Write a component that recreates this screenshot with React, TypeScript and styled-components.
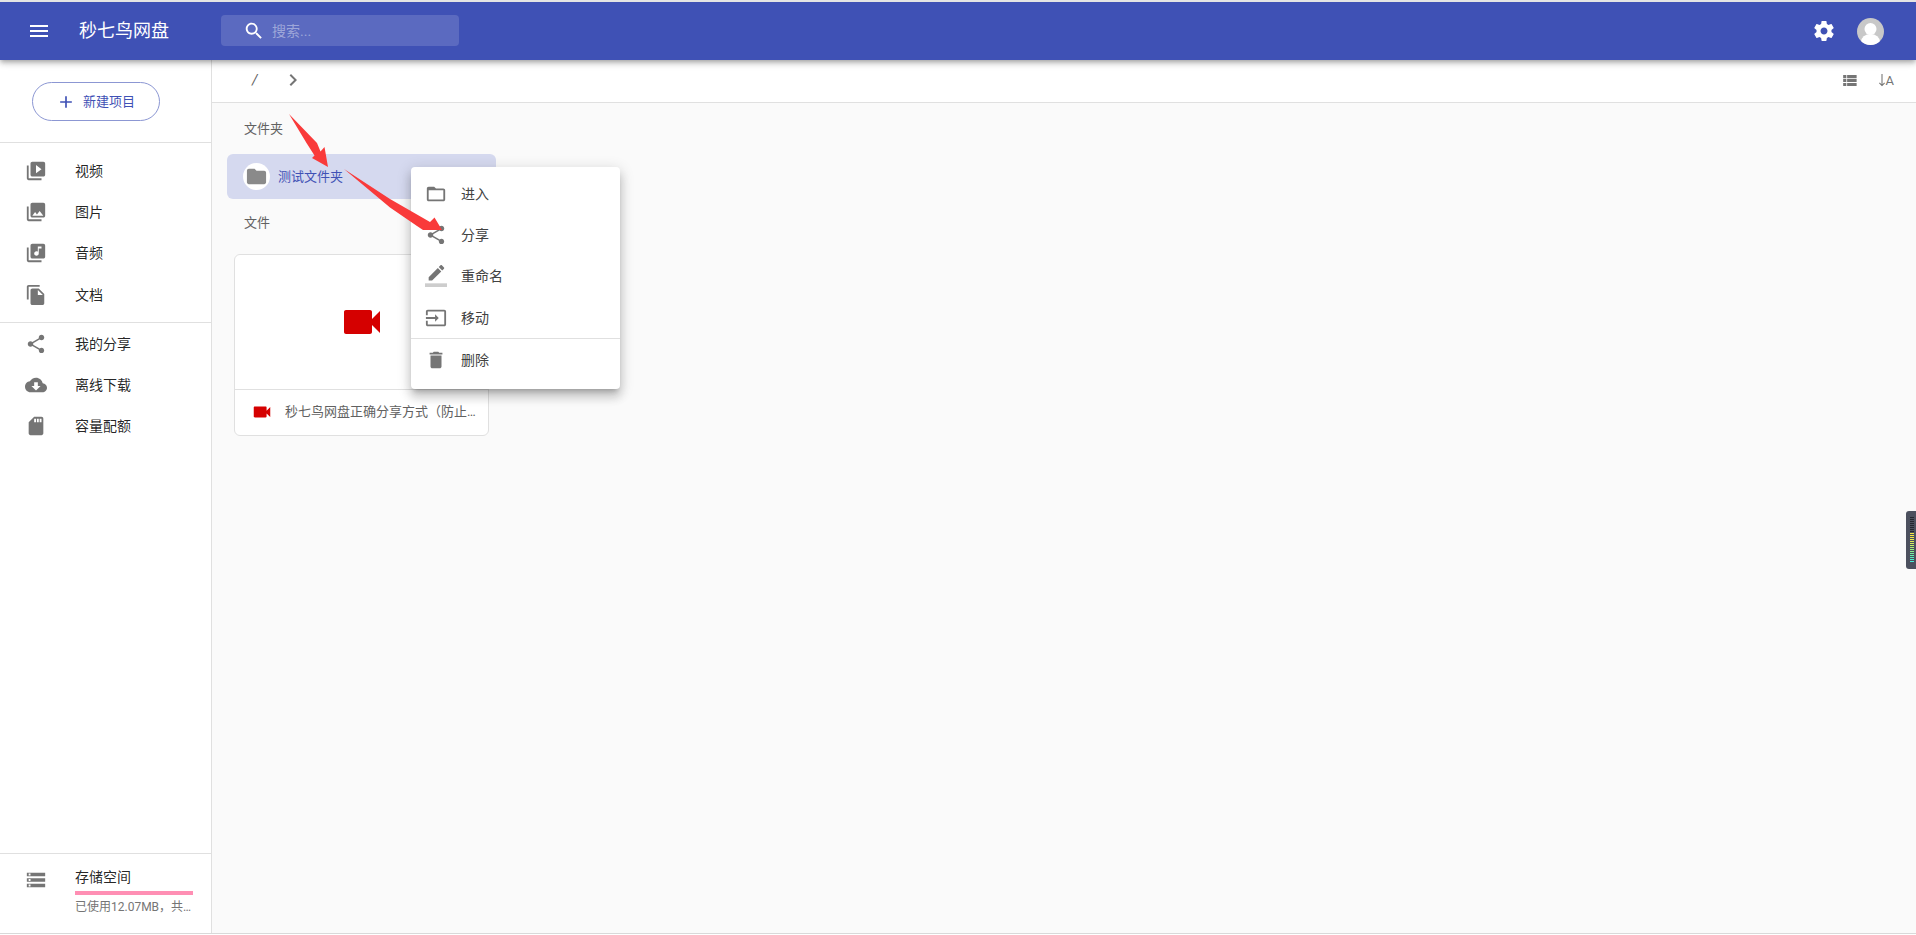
import React from 'react'
import styled, { createGlobalStyle } from 'styled-components'

const FONT = `Roboto, "Noto Sans CJK SC", "Noto Sans", sans-serif`

const GlobalStyle = createGlobalStyle`
  html, body {
    margin: 0;
    padding: 0;
    background: #ffffff;
    font-family: ${FONT};
    overflow: hidden;
  }
`

const ICONS: Record<string, React.ReactNode> = {
  menu: <path d="M3 18h18v-2H3v2zm0-5h18v-2H3v2zm0-7v2h18V6H3z" />,
  search: <path d="M15.5 14h-.79l-.28-.27C15.41 12.59 16 11.11 16 9.5 16 5.91 13.09 3 9.5 3S3 5.91 3 9.5 5.91 16 9.5 16c1.61 0 3.09-.59 4.23-1.57l.27.28v.79l5 4.99L20.49 19l-4.99-5zm-6 0C7.01 14 5 11.99 5 9.5S7.01 5 9.5 5 14 7.01 14 9.5 11.99 14 9.5 14z" />,
  settings: <path d="M19.43 12.98c.04-.32.07-.64.07-.98s-.03-.66-.07-.98l2.11-1.65c.19-.15.24-.42.12-.64l-2-3.46c-.12-.22-.39-.3-.61-.22l-2.49 1c-.52-.4-1.08-.73-1.69-.98l-.38-2.65C14.46 2.18 14.25 2 14 2h-4c-.25 0-.46.18-.49.42l-.38 2.65c-.61.25-1.17.59-1.69.98l-2.49-1c-.23-.09-.49 0-.61.22l-2 3.46c-.13.22-.07.49.12.64l2.11 1.65c-.04.32-.07.65-.07.98s.03.66.07.98l-2.11 1.65c-.19.15-.24.42-.12.64l2 3.46c.12.22.39.3.61.22l2.49-1c.52.4 1.08.73 1.69.98l.38 2.65c.03.24.24.42.49.42h4c.25 0 .46-.18.49-.42l.38-2.65c.61-.25 1.17-.59 1.69-.98l2.49 1c.23.09.49 0 .61-.22l2-3.46c.12-.22.07-.49-.12-.64l-2.11-1.65zM12 15.5c-1.93 0-3.5-1.57-3.5-3.5s1.57-3.5 3.5-3.5 3.5 1.57 3.5 3.5-1.57 3.5-3.5 3.5z" />,
  add: <path d="M19 13h-6v6h-2v-6H5v-2h6V5h2v6h6v2z" />,
  video: <path d="M4 6H2v14c0 1.1.9 2 2 2h14v-2H4V6zm16-4H8c-1.1 0-2 .9-2 2v12c0 1.1.9 2 2 2h12c1.1 0 2-.9 2-2V4c0-1.1-.9-2-2-2zm-8 12.5v-9l6 4.5-6 4.5z" />,
  photo: <path d="M22 16V4c0-1.1-.9-2-2-2H8c-1.1 0-2 .9-2 2v12c0 1.1.9 2 2 2h12c1.1 0 2-.9 2-2zm-11-4l2.03 2.71L16 11l4 5H8l3-4zM2 6v14c0 1.1.9 2 2 2h14v-2H4V6H2z" />,
  music: <path d="M20 2H8c-1.1 0-2 .9-2 2v12c0 1.1.9 2 2 2h12c1.1 0 2-.9 2-2V4c0-1.1-.9-2-2-2zm-2 5h-3v5.5c0 1.38-1.12 2.5-2.5 2.5S10 13.88 10 12.5s1.12-2.5 2.5-2.5c.57 0 1.08.19 1.5.51V5h4v2zM4 6H2v14c0 1.1.9 2 2 2h14v-2H4V6z" />,
  doc: <path d="M16 1H4c-1.1 0-2 .9-2 2v14h2V3h12V1zm-1 4l6 6v10c0 1.1-.9 2-2 2H7.99C6.89 23 6 22.1 6 21l.01-14c0-1.1.89-2 1.99-2h7zm-1 7h5.5L14 6.5V12z" />,
  share: <path d="M18 16.08c-.76 0-1.44.3-1.96.77L8.91 12.7c.05-.23.09-.46.09-.7s-.04-.47-.09-.7l7.05-4.11c.54.5 1.25.81 2.04.81 1.66 0 3-1.34 3-3s-1.34-3-3-3-3 1.34-3 3c0 .24.04.47.09.7L8.04 9.81C7.5 9.31 6.79 9 6 9c-1.66 0-3 1.34-3 3s1.34 3 3 3c.79 0 1.5-.31 2.04-.81l7.12 4.16c-.05.21-.08.43-.08.65 0 1.61 1.31 2.92 2.92 2.92 1.61 0 2.92-1.31 2.92-2.92s-1.31-2.92-2.92-2.92z" />,
  cloud: <path d="M19.35 10.04C18.67 6.59 15.64 4 12 4 9.11 4 6.6 5.64 5.35 8.04 2.34 8.36 0 10.91 0 14c0 3.31 2.69 6 6 6h13c2.76 0 5-2.24 5-5 0-2.64-2.05-4.78-4.65-4.96zM17 13l-5 5-5-5h3V9h4v4h3z" />,
  sd: <path d="M18 2h-8L4.02 8 4 20c0 1.1.9 2 2 2h12c1.1 0 2-.9 2-2V4c0-1.1-.9-2-2-2zm-6 6h-2V4h2v4zm3 0h-2V4h2v4zm3 0h-2V4h2v4z" />,
  storage: <path d="M2 20h20v-4H2v4zm2-3h2v2H4v-2zM2 4v4h20V4H2zm4 3H4V5h2v2zm-4 7h20v-4H2v4zm2-3h2v2H4v-2z" />,
  folder: <path d="M10 4H4c-1.1 0-1.99.9-1.99 2L2 18c0 1.1.9 2 2 2h16c1.1 0 2-.9 2-2V8c0-1.1-.9-2-2-2h-8l-2-2z" />,
  folderOpen: <path d="M20 6h-8l-2-2H4c-1.1 0-1.99.9-1.99 2L2 18c0 1.1.9 2 2 2h16c1.1 0 2-.9 2-2V8c0-1.1-.9-2-2-2zm0 12H4V8h16v10z" />,
  rename: (
    <>
      <path d="M17.75 7L14 3.25l-10 10V17h3.75l10-10zm2.96-2.96c.39-.39.39-1.02 0-1.41L18.37.29c-.39-.39-1.02-.39-1.41 0L15 2.25 18.75 6l1.96-1.96z" />
      <path fillOpacity=".36" d="M0 20h24v4H0z" />
    </>
  ),
  move: <path d="M21 3.01H3c-1.1 0-2 .9-2 2V9h2V4.99h18v14.03H3V15H1v4.01c0 1.1.9 1.98 2 1.98h18c1.1 0 2-.88 2-1.98v-14c0-1.1-.9-2-2-2zM11 16l4-4-4-4v3H1v2h10v3z" />,
  trash: <path d="M6 19c0 1.1.9 2 2 2h8c1.1 0 2-.9 2-2V7H6v12zM19 4h-3.5l-1-1h-5l-1 1H5v2h14V4z" />,
  camera: <path d="M17 10.5V7c0-.55-.45-1-1-1H4c-.55 0-1 .45-1 1v10c0 .55.45 1 1 1h12c.55 0 1-.45 1-1v-3.5l4 4v-11l-4 4z" />,
  list: <path d="M4 14h4v-4H4v4zm0 5h4v-4H4v4zM4 9h4V5H4v4zm5 5h12v-4H9v4zm0 5h12v-4H9v4zM9 5v4h12V5H9z" />,
  chevron: <path d="M10 6L8.59 7.41 13.17 12l-4.58 4.59L10 18l6-6z" />,
  arrowDown: <path d="M11.2 3h1.6v15.5l2.6-2.6 1.1 1.1-4.5 4.5-4.5-4.5 1.1-1.1 2.6 2.6z" />,
}

const IconSvg = styled.svg<{ $size?: number; $color?: string }>`
  display: block;
  flex: none;
  width: ${p => p.$size ?? 22}px;
  height: ${p => p.$size ?? 22}px;
  fill: ${p => p.$color ?? '#757575'};
`

const Icon = ({ name, size, color }: { name: string; size?: number; color?: string }) => (
  <IconSvg viewBox="0 0 24 24" $size={size} $color={color}>{ICONS[name]}</IconSvg>
)

const Page = styled.div`
  position: relative;
  width: 1916px;
  height: 935px;
  display: flex;
  flex-direction: column;
  border-top: 2px solid #e4e4e4;
  box-sizing: border-box;
  overflow: hidden;
  line-height: 1;
`

const AppBar = styled.header`
  flex: none;
  height: 58px;
  padding: 0 32px 0 27px;
  display: flex;
  align-items: center;
  background: #3f51b5;
  color: #ffffff;
  position: relative;
  z-index: 2;
  box-shadow: 0 2px 4px -1px rgba(0,0,0,.2), 0 4px 5px 0 rgba(0,0,0,.14), 0 1px 10px 0 rgba(0,0,0,.12);
`

const Brand = styled.div`
  margin-left: 28px;
  width: 90px;
  font-size: 18px;
  font-weight: 400;
  white-space: nowrap;
`

const SearchBox = styled.div`
  margin: 0 0 1px 52px;
  width: 238px;
  height: 31px;
  padding-left: 22px;
  box-sizing: border-box;
  display: flex;
  align-items: center;
  gap: 7px;
  border-radius: 4px;
  background: rgba(255,255,255,.15);
  font-size: 14px;
  color: rgba(255,255,255,.42);
`

const BarActions = styled.div`
  margin-left: auto;
  display: flex;
  align-items: center;
  gap: 21px;
`

const Avatar = styled.svg`
  display: block;
  width: 27px;
  height: 27px;
`

const Body = styled.div`
  flex: 1;
  min-height: 0;
  display: flex;
`

const Sidebar = styled.aside`
  flex: none;
  width: 212px;
  box-sizing: border-box;
  display: flex;
  flex-direction: column;
  border-right: 1px solid #e0e0e0;
  background: #ffffff;
`

const NewBlock = styled.div`
  height: 83px;
  padding: 22px 0 0 32px;
  box-sizing: border-box;
  border-bottom: 1px solid #e0e0e0;
`

const NewButton = styled.div`
  width: 128px;
  height: 39px;
  box-sizing: border-box;
  display: flex;
  align-items: center;
  padding-left: 23px;
  gap: 7px;
  border: 1px solid #8c97d3;
  border-radius: 20px;
  font-size: 13px;
  color: #3f51b5;
`

const NavList = styled.nav<{ $divided?: boolean }>`
  padding: ${p => (p.$divided ? '7px 0 7px' : '0')};
  border-bottom: ${p => (p.$divided ? '1px solid #e0e0e0' : 'none')};
`

const NavRow = styled.div`
  height: 41.3px;
  padding-left: 25px;
  display: flex;
  align-items: center;
  font-size: 14px;
  color: rgba(0,0,0,.87);
`

const NavLabel = styled.span`
  margin-left: 28px;
`

const StoragePanel = styled.div`
  margin-top: auto;
  height: 80px;
  box-sizing: border-box;
  border-top: 1px solid #e0e0e0;
  padding: 15px 0 0 25px;
  display: flex;
`

const StorageInfo = styled.div`
  margin-left: 28px;
  width: 118px;
`

const StorageTitle = styled.div`
  font-size: 14px;
  line-height: 16px;
  color: rgba(0,0,0,.87);
`

const StorageBar = styled.div`
  margin-top: 6px;
  height: 4px;
  background: #ff8fb4;
`

const StorageText = styled.div`
  margin-top: 3px;
  font-size: 12px;
  line-height: 18px;
  color: #757575;
  white-space: nowrap;
  overflow: hidden;
  text-overflow: ellipsis;
`

const Main = styled.main`
  flex: 1;
  min-width: 0;
  background: #fafafa;
`

const PathBar = styled.div`
  height: 43px;
  box-sizing: border-box;
  padding: 0 22px 2px 40px;
  display: flex;
  align-items: center;
  background: #ffffff;
  border-bottom: 1px solid #e0e0e0;
`

const Slash = styled.span`
  width: 29px;
  font-size: 14px;
  font-style: italic;
  color: #616161;
`

const PathTools = styled.div`
  margin-left: auto;
  display: flex;
  align-items: center;
  gap: 15px;
`

const SortGlyph = styled.div`
  display: flex;
  align-items: center;
  font-size: 13px;
  color: #757575;
`

const SortLetter = styled.span`
  margin-left: -4px;
`

const Content = styled.div`
  padding: 0 15px;
`

const SectionLabel = styled.div`
  height: 51px;
  padding-left: 17px;
  display: flex;
  align-items: center;
  font-size: 13px;
  color: #616161;
`

const FolderRow = styled.div`
  width: 269px;
  height: 45px;
  box-sizing: border-box;
  padding-left: 16px;
  display: flex;
  align-items: center;
  border-radius: 6px;
  background: #d5d9ef;
  font-size: 13px;
  color: #3f51b5;
`

const FolderBadge = styled.div`
  width: 27px;
  height: 27px;
  margin-right: 8px;
  display: flex;
  align-items: center;
  justify-content: center;
  border-radius: 50%;
  background: #ffffff;
`

const FileSection = styled(SectionLabel)`
  height: 46px;
`

const FileCard = styled.div`
  margin: 9px 0 0 7px;
  width: 255px;
  height: 182px;
  box-sizing: border-box;
  border: 1px solid #e0e0e0;
  border-radius: 6px;
  background: #ffffff;
  overflow: hidden;
`

const Preview = styled.div`
  height: 134px;
  display: flex;
  align-items: center;
  justify-content: center;
  border-bottom: 1px solid #e0e0e0;
`

const FileTitle = styled.div`
  height: 43px;
  padding: 0 10px 0 16px;
  display: flex;
  align-items: center;
  gap: 12px;
  font-size: 13px;
  color: #616161;
`

const FileName = styled.span`
  line-height: 16px;
  white-space: nowrap;
  overflow: hidden;
  text-overflow: ellipsis;
`

const ContextMenu = styled.div`
  position: absolute;
  left: 411px;
  top: 165px;
  width: 209px;
  height: 222px;
  box-sizing: border-box;
  padding-top: 6px;
  border-radius: 4px;
  background: #ffffff;
  z-index: 3;
  box-shadow: 0 5px 5px -3px rgba(0,0,0,.2), 0 8px 10px 1px rgba(0,0,0,.14), 0 3px 14px 2px rgba(0,0,0,.12);
`

const MenuRow = styled.div`
  height: 41.3px;
  padding-left: 14px;
  display: flex;
  align-items: center;
  gap: 14px;
  font-size: 14px;
  color: #424242;
`

const MenuDivider = styled.div`
  height: 1px;
  background: #e0e0e0;
`

const ArrowLayer = styled.svg`
  position: absolute;
  left: 0;
  top: -2px;
  width: 1916px;
  height: 935px;
  z-index: 4;
  pointer-events: none;
`

const SideWidget = styled.div`
  position: absolute;
  right: 0;
  top: 509px;
  width: 10px;
  height: 58px;
  padding: 6px 2px 0 4px;
  box-sizing: border-box;
  display: flex;
  flex-direction: column;
  gap: 1px;
  border-radius: 3px 0 0 3px;
  background: #4c505e;
  z-index: 3;
`

const Tick = styled.div<{ $color: string }>`
  flex: none;
  height: 1px;
  background: ${p => p.$color};
`

const BottomEdge = styled.div`
  flex: none;
  height: 2px;
  background: #d9d9d9;
  border-bottom: 1px solid #ffffff;
  box-sizing: border-box;
`

const TICKS = [
  '#23262e', '#23262e', '#23262e', '#23262e', '#23262e', '#23262e', '#23262e', '#23262e',
  '#f5e642', '#f5e642', '#f2e846', '#ecea4c', '#e0ec54', '#d2ee5e', '#c2f068', '#b0f074',
  '#9cf080', '#8af08e', '#78f09e', '#68f0ae', '#5af0be', '#4ef0cc', '#46f0d8',
]

const topNav = [
  { icon: 'video', label: '视频' },
  { icon: 'photo', label: '图片' },
  { icon: 'music', label: '音频' },
  { icon: 'doc', label: '文档' },
]

const bottomNav = [
  { icon: 'share', label: '我的分享' },
  { icon: 'cloud', label: '离线下载' },
  { icon: 'sd', label: '容量配额' },
]

const menuTop = [
  { icon: 'folderOpen', label: '进入' },
  { icon: 'share', label: '分享' },
  { icon: 'rename', label: '重命名' },
  { icon: 'move', label: '移动' },
]

export default function App() {
  return (
    <Page>
      <GlobalStyle />
      <AppBar>
        <Icon name="menu" size={24} color="#ffffff" />
        <Brand>秒七鸟网盘</Brand>
        <SearchBox>
          <Icon name="search" size={22} color="#ffffff" />
          搜索...
        </SearchBox>
        <BarActions>
          <Icon name="settings" size={24} color="#ffffff" />
          <Avatar viewBox="0 0 27 27">
            <defs>
              <clipPath id="avatarClip"><circle cx="13.5" cy="13.5" r="13.5" /></clipPath>
            </defs>
            <circle cx="13.5" cy="13.5" r="13.5" fill="#c8c8c8" />
            <g clipPath="url(#avatarClip)" fill="#ffffff">
              <circle cx="13.5" cy="11" r="6" />
              <ellipse cx="13.5" cy="24" rx="9.5" ry="8" />
            </g>
          </Avatar>
        </BarActions>
      </AppBar>
      <Body>
        <Sidebar>
          <NewBlock>
            <NewButton>
              <Icon name="add" size={20} color="#3f51b5" />
              新建项目
            </NewButton>
          </NewBlock>
          <NavList $divided>
            {topNav.map(item => (
              <NavRow key={item.label}>
                <Icon name={item.icon} />
                <NavLabel>{item.label}</NavLabel>
              </NavRow>
            ))}
          </NavList>
          <NavList>
            {bottomNav.map(item => (
              <NavRow key={item.label}>
                <Icon name={item.icon} />
                <NavLabel>{item.label}</NavLabel>
              </NavRow>
            ))}
          </NavList>
          <StoragePanel>
            <Icon name="storage" />
            <StorageInfo>
              <StorageTitle>存储空间</StorageTitle>
              <StorageBar />
              <StorageText>已使用12.07MB，共1.00GB</StorageText>
            </StorageInfo>
          </StoragePanel>
        </Sidebar>
        <Main>
          <PathBar>
            <Slash>/</Slash>
            <Icon name="chevron" size={24} />
            <PathTools>
              <Icon name="list" size={19} />
              <SortGlyph>
                <Icon name="arrowDown" size={16} />
                <SortLetter>A</SortLetter>
              </SortGlyph>
            </PathTools>
          </PathBar>
          <Content>
            <SectionLabel>文件夹</SectionLabel>
            <FolderRow>
              <FolderBadge><Icon name="folder" size={23} color="#8a8a8a" /></FolderBadge>
              测试文件夹
            </FolderRow>
            <FileSection>文件</FileSection>
            <FileCard>
              <Preview><Icon name="camera" size={48} color="#d50000" /></Preview>
              <FileTitle>
                <Icon name="camera" size={22} color="#d50000" />
                <FileName>秒七鸟网盘正确分享方式（防止被封）.mp4</FileName>
              </FileTitle>
            </FileCard>
          </Content>
        </Main>
      </Body>
      <BottomEdge />
      <ContextMenu>
        {menuTop.map(item => (
          <MenuRow key={item.label}>
            <Icon name={item.icon} />
            {item.label}
          </MenuRow>
        ))}
        <MenuDivider />
        <MenuRow>
          <Icon name="trash" />
          删除
        </MenuRow>
      </ContextMenu>
      <SideWidget>
        {TICKS.map((color, i) => <Tick key={i} $color={color} />)}
      </SideWidget>
      <ArrowLayer viewBox="0 0 1916 935">
        <polygon fill="#f93a3a" points="289,114 317,143 320.5,151.5 324.5,147 328,167 312,158 314.5,155.5 306.5,143" />
        <polygon fill="#f93a3a" points="344,169 390,199 430,222 434.5,217.5 442,230 423,230 417,226 390,207.5" />
      </ArrowLayer>
    </Page>
  )
}
